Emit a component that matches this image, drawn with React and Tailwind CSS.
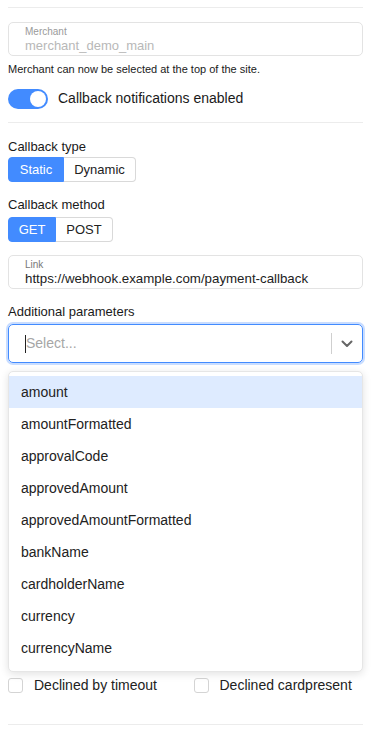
import React, { useState } from 'react';

const params = [
    'amount',
    'amountFormatted',
    'approvalCode',
    'approvedAmount',
    'approvedAmountFormatted',
    'bankName',
    'cardholderName',
    'currency',
    'currencyName',
];

function Segmented({ options, value, onChange, widths }) {
    return (
        <div className="flex h-[25px]">
            {options.map((opt, i) => (
                <button
                    key={opt}
                    onClick={() => onChange(opt)}
                    className={
                        (value === opt
                            ? 'bg-[#428bff] text-white border-[#428bff] '
                            : 'bg-white text-[#222] border-[#d9d9d9] ') +
                        (i === 0 ? 'rounded-l-[4px] ' : 'rounded-r-[4px] border-l-0 ') +
                        widths[i] +
                        ' h-[25px] border text-[13px] leading-none flex items-center justify-center'
                    }
                >
                    {opt}
                </button>
            ))}
        </div>
    );
}

export default function App() {
    const [enabled, setEnabled] = useState(true);
    const [type, setType] = useState('Static');
    const [method, setMethod] = useState('GET');

    return (
        <div className="w-[371px] min-h-[731px] bg-white px-2 text-[#1a1a1a] font-['Liberation_Sans',Arial,sans-serif]">
            <div className="pt-[7px]">
                <div className="h-px bg-[#ececec]" />
            </div>

            {/* Merchant */}
            <div className="mt-[14px] h-[34px] border border-[#e3e3e3] rounded-[5px] pl-4 pt-[3px]">
                <div className="text-[10px] leading-[12px] text-[#9a9a9a]">Merchant</div>
                <div className="text-[13px] leading-[16px] text-[#b8b8b8]">merchant_demo_main</div>
            </div>
            <p className="mt-[6px] text-[11px] leading-[14px]">
                Merchant can now be selected at the top of the site.
            </p>

            <div className="mt-[12px] flex items-center gap-[10px]">
                <button
                    onClick={() => setEnabled(!enabled)}
                    className={(enabled ? 'bg-[#428bff] ' : 'bg-[#ccc] ') + 'w-10 h-5 rounded-full flex items-center px-[2px] ' + (enabled ? 'justify-end' : 'justify-start')}
                >
                    <span className="w-4 h-4 rounded-full bg-white block" />
                </button>
                <span className="text-[14px]">Callback notifications enabled</span>
            </div>

            <div className="mt-[13px] h-px bg-[#ececec]" />

            <div className="mt-[16px] text-[13px] leading-[16px]">Callback type</div>
            <div className="mt-[2px]">
                <Segmented
                    options={['Static', 'Dynamic']}
                    value={type}
                    onChange={setType}
                    widths={['w-[56px]', 'w-[72px]']}
                />
            </div>

            <div className="mt-[15px] text-[13px] leading-[16px]">Callback method</div>
            <div className="mt-[4px]">
                <Segmented
                    options={['GET', 'POST']}
                    value={method}
                    onChange={setMethod}
                    widths={['w-[48px]', 'w-[57px]']}
                />
            </div>

            {/* Link */}
            <div className="mt-[13px] h-[34px] border border-[#e3e3e3] rounded-[5px] pl-4 pt-[3px]">
                <div className="text-[10px] leading-[12px] text-[#777]">Link</div>
                <div className="text-[13.3px] leading-[16px] text-[#222]">https://webhook.example.com/payment-callback</div>
            </div>

            <div className="mt-[15px] text-[13px] leading-[16px]">Additional parameters</div>

            <div className="relative mt-[4px]">
                <div className="h-[39px] border border-[#428bff] rounded-[5px] ring-2 ring-[#c9ddff] flex items-center">
                    <div className="flex-1 pl-4 flex items-center">
                        <span className="w-px h-[18px] bg-[#222]" />
                        <span className="text-[14px] text-[#a6a6a6]">Select...</span>
                    </div>
                    <span className="w-px h-[21px] bg-[#cfcfcf]" />
                    <div className="w-[30px] flex justify-center">
                        <svg width="12" height="8" viewBox="0 0 12 8" fill="none">
                            <path d="M1.5 1.5 L6 6 L10.5 1.5" stroke="#666" strokeWidth="2" strokeLinecap="round" strokeLinejoin="round" />
                        </svg>
                    </div>
                </div>

                <div className="absolute left-0 right-0 top-[47px] z-10 bg-white border border-[#e6e6e6] rounded-[5px] shadow-[0_2px_8px_rgba(0,0,0,0.12)] pt-1 pb-[7px]">
                    {params.map((p, i) => (
                        <div
                            key={p}
                            className={(i === 0 ? 'bg-[#deebff] ' : '') + 'h-8 flex items-center px-3 text-[14px] text-[#222]'}
                        >
                            {p}
                        </div>
                    ))}
                </div>

                <div className="mt-[312px] grid grid-cols-2 gap-x-4">
                    {['Declined by timeout', 'Declined cardpresent'].map((s) => (
                        <label key={s} className="flex items-center gap-[11px] h-5 text-[14px] text-[#222]">
                            <span className="w-[15px] h-[15px] border border-[#d4d4d4] rounded-[3px] bg-white shrink-0" />
                            {s}
                        </label>
                    ))}
                </div>
            </div>

            <div className="mt-[29px] h-px bg-[#ececec]" />
        </div>
    );
}
